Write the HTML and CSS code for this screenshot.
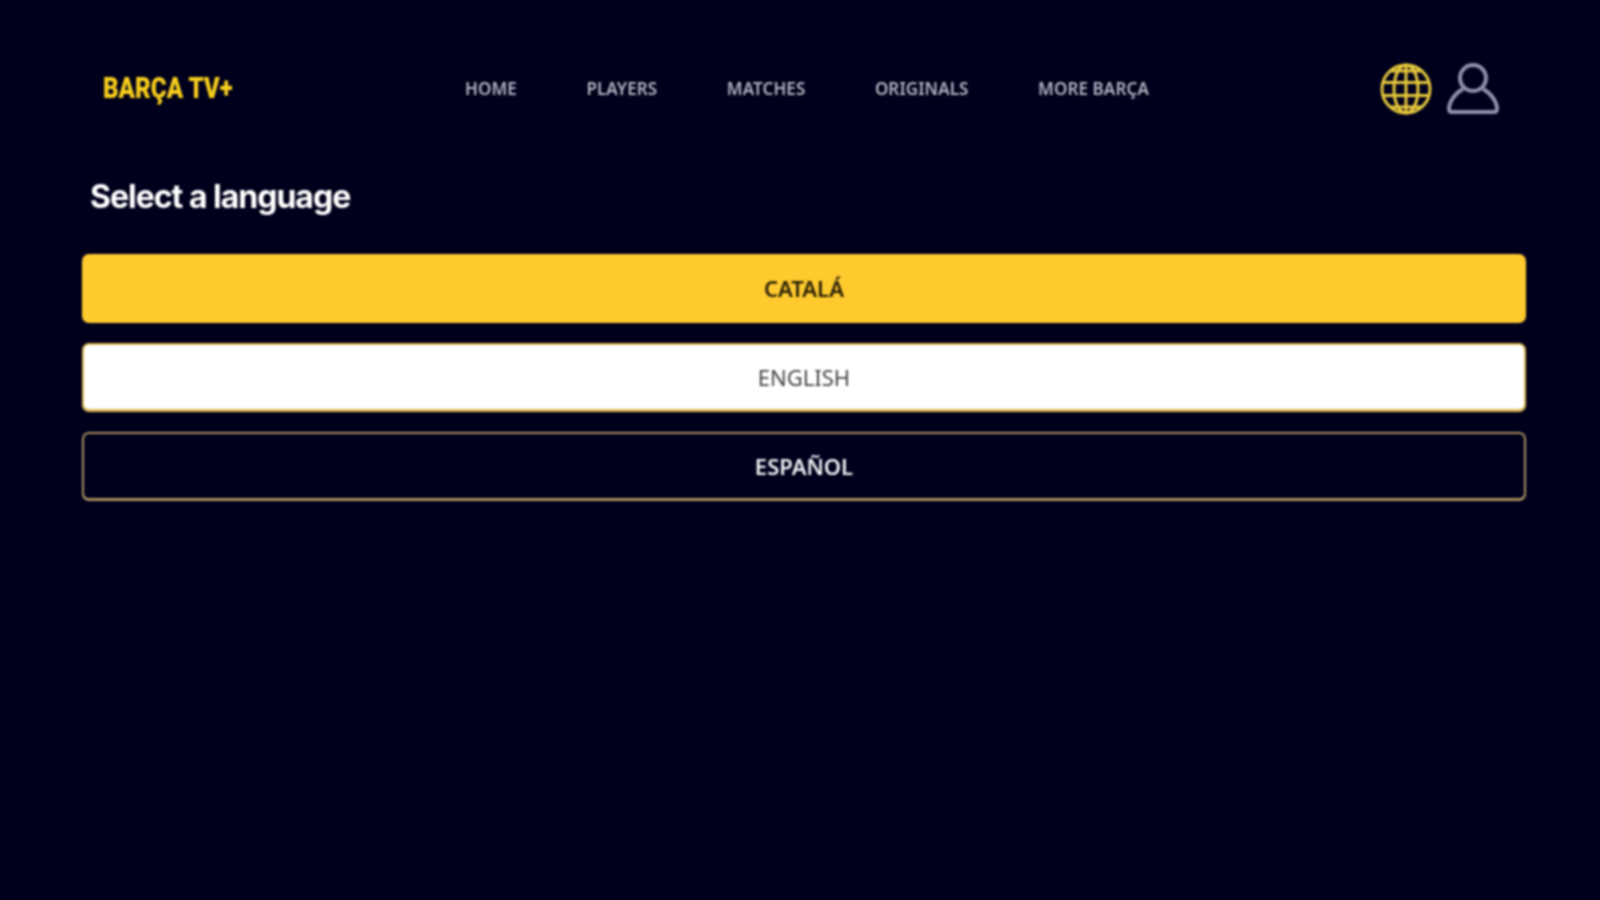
FILE: index.html
```html
<!DOCTYPE html>
<html lang="en">

<head>
  <meta charset="UTF-8" />
  <meta name="viewport" content="width=device-width, initial-scale=1.0">
  <title>Barça TV+</title>
  <link rel="stylesheet" href="styles.css">
</head>

<body>
  <div class="container">
    <header class="topbar">
      <div class="logo">BARÇA TV+</div>
      <nav class="menu">
        <a href="#">HOME</a>
        <a href="#">PLAYERS</a>
        <a href="#">MATCHES</a>
        <a href="#">ORIGINALS</a>
        <a href="#">MORE BARÇA</a>
      </nav>
      <div class="icons">
        <svg class="icon-globe" width="52" height="52" viewBox="0 0 52 52" fill="none" stroke="#e6c83c" stroke-width="3">
          <circle cx="26" cy="26" r="24" />
          <ellipse cx="26" cy="26" rx="12" ry="24" />
          <path d="M26 2v48M3 19.500h46M3 32.500h46M10 8h32M10 44h32" />
        </svg>
        <svg class="icon-user" width="54" height="54" viewBox="0 0 54 54" fill="none" stroke="#9090a8" stroke-width="4" stroke-linejoin="round">
          <circle cx="27" cy="16" r="13" />
          <path d="M17 27C9 31 3 40 3 47q0 3 3 3h42q3 0 3-3C51 40 45 31 37 27" />
        </svg>
      </div>
    </header>

    <h1 class="title">Select a language</h1>

    <div class="languages">
      <button type="button" class="btn-lang btn-active">CATALÁ</button>
      <button type="button" class="btn-lang btn-hover">ENGLISH</button>
      <button type="button" class="btn-lang">ESPAÑOL</button>
    </div>
  </div>
</body>

</html>
```

FILE: styles.css
```css
* {
  box-sizing: border-box;
}

body {
  margin: 0;
  background-color: #00001c;
  font-family: 'Inter', sans-serif;
  min-height: 100vh;
}

.container {
  padding: 62px 74px 0 82px;
  filter: blur(0.85px);
}

.topbar {
  display: flex;
  align-items: center;
  height: 54px;
  padding: 0 26px 0 21px;
}

.logo {
  width: 362px;
  padding-bottom: 3px;
  color: #f8cf1c;
  font-family: 'Roboto', sans-serif;
  font-size: 30px;
  font-weight: 900;
  transform: scaleX(0.805);
  transform-origin: left center;
}

.menu {
  display: flex;
  gap: 69.500px;
  flex: 1;
  padding-bottom: 2px;
}

.menu a {
  color: #b4b4c4;
  font-family: 'Noto Sans', sans-serif;
  font-size: 17px;
  font-weight: 600;
  letter-spacing: 0.1px;
  text-decoration: none;
}

.icons {
  display: flex;
  align-items: center;
  gap: 14px;
}

.title {
  margin: 57px 0 0 8px;
  color: #ffffff;
  font-size: 32px;
  font-weight: 700;
  line-height: 48px;
  letter-spacing: -1px;
}

.languages {
  margin-top: 33px;
  display: flex;
  flex-direction: column;
  gap: 20px;
}

.btn-lang {
  height: 69px;
  padding-bottom: 2px;
  border: 2px solid #a89060;
  border-bottom-width: 3px;
  border-radius: 7px;
  background-color: #00001c;
  color: #f0f0f4;
  font-family: 'Noto Sans', sans-serif;
  font-size: 22px;
  font-weight: 600;
  cursor: pointer;
}

.btn-active {
  border-color: #ffca2e;
  background-color: #ffca2e;
  color: #2a2108;
}

.btn-hover {
  border-color: #d9b755;
  background-color: #ffffff;
  color: #444444;
  font-weight: 400;
}
```
